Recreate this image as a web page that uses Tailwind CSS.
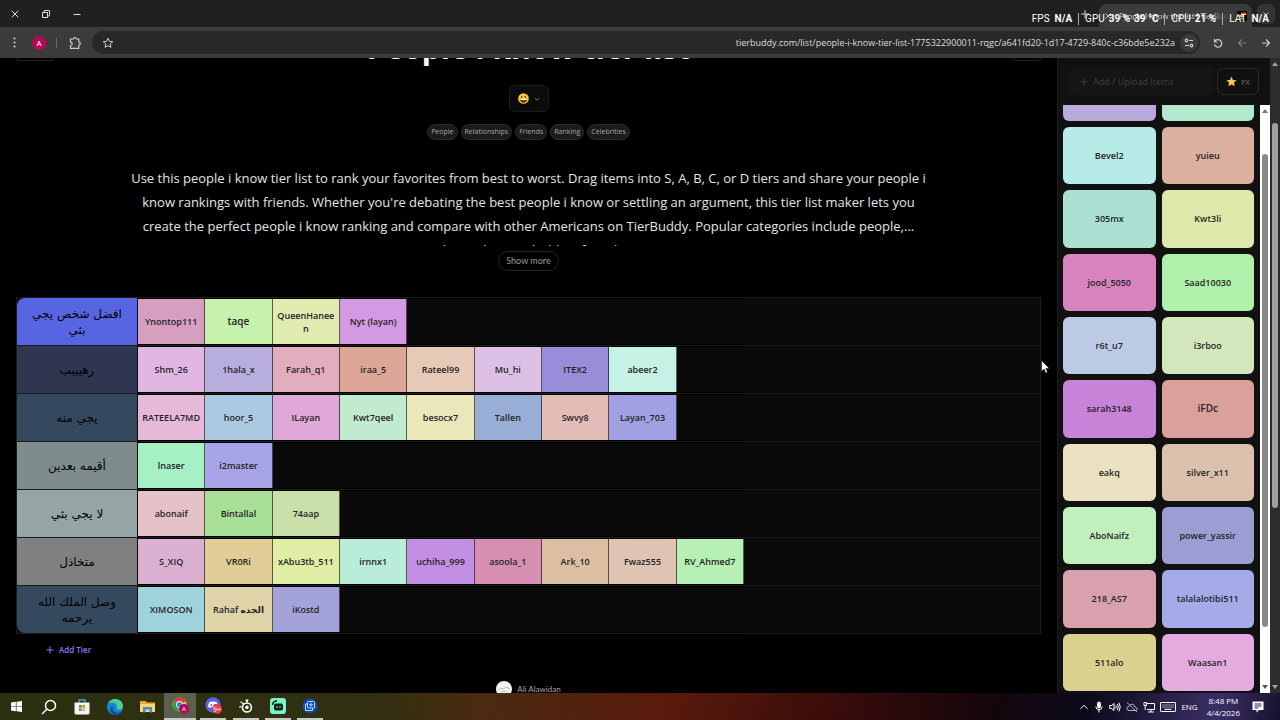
<!DOCTYPE html>
<html lang="en">
<head>
  <meta charset="UTF-8">
  <title>People I know tier list | TierBuddy</title>
  <script src="https://cdn.jsdelivr.net/npm/@tailwindcss/browser@4"></script>
</head>
<body class="relative flex h-screen flex-col overflow-hidden bg-black font-['Open_Sans','DejaVu_Sans',sans-serif] text-white">

  <!-- Window title bar -->
  <header class="flex h-[27px] shrink-0 items-center justify-between bg-[#1f2020] pl-2">
    <div class="flex items-center gap-[18px] text-[#dddddd]">
      <button aria-label="Close window" class="grid size-[13px] place-items-center">
        <svg class="size-2" viewBox="0 0 8 8" fill="none" stroke="currentColor"><path d="M.7.7l6.6 6.6M7.3.7L.7 7.3"/></svg>
      </button>
      <button aria-label="Restore window" class="grid size-[13px] place-items-center">
        <svg class="size-2" viewBox="0 0 8 8" fill="none" stroke="currentColor"><path d="M.5 2.5h5v5h-5zM2 2.2V.9Q2 .5 2.4.5H7q.5 0 .5.5v4.6q0 .4-.4.4H6"/></svg>
      </button>
      <button aria-label="Minimize window" class="grid size-[13px] place-items-center">
        <svg class="size-2" viewBox="0 0 8 8" stroke="currentColor"><path d="M.5 4.5h7"/></svg>
      </button>
    </div>
    <div class="flex h-full items-center text-[#cccccc]">
      <button aria-label="New tab" class="mr-[6px] grid size-4 place-items-center">
        <svg class="size-2" viewBox="0 0 8 8" stroke="currentColor"><path d="M4 0v8M0 4h8"/></svg>
      </button>
      <div class="mt-1 flex h-[23px] w-[153px] items-center gap-2 rounded-t-lg bg-[#3b3b3b] pr-[5px] pl-[6px]">
        <button aria-label="Close tab">
          <svg class="size-[6px]" viewBox="0 0 6 6" stroke="currentColor"><path d="M.5.5l5 5M5.5.5l-5 5"/></svg>
        </button>
        <span class="flex-1 overflow-hidden bg-linear-to-r from-[#dddddd] from-80% to-transparent bg-clip-text font-['Lato',sans-serif] text-[8px] whitespace-nowrap text-transparent">People I know tier list | TierBuddy</span>
        <svg class="size-[10px]" viewBox="0 0 10 10"><path fill="#000" d="M0 0h10v10H0z"/><path stroke="#37c25b" stroke-width="2" d="M3 7.5h3"/><path stroke="#f0b23c" stroke-width="2" d="M2 5h5"/><path stroke="#ef5350" stroke-width="2" d="M4 2.5h5"/></svg>
      </div>
      <button aria-label="Search tabs" class="mx-[5px] grid h-[20px] w-[18px] place-items-center rounded-md bg-[#343434]">
        <svg class="size-[6px]" viewBox="0 0 6 6" fill="none" stroke="currentColor"><path d="M.5 1.5L3 4l2.500-2.500"/></svg>
      </button>
    </div>
  </header>

  <!-- Browser toolbar -->
  <nav class="flex h-[31px] shrink-0 items-center bg-[#3b3b3b] pr-[9px] pl-2 text-[#cccccc]">
    <button aria-label="Menu" class="grid w-[13px] place-items-center">
      <svg class="h-[11px] w-[3px]" viewBox="0 0 3 11" fill="currentColor"><circle cx="1.500" cy="1.500" r="1.100"/><circle cx="1.500" cy="5.500" r="1.100"/><circle cx="1.500" cy="9.500" r="1.100"/></svg>
    </button>
    <button class="ml-[11px] size-[14px] rounded-full bg-[#b5085a] text-center text-[8px] leading-[14px] text-white">A</button>
    <span class="ml-[10px] h-[10px] w-px bg-[#666666]"></span>
    <button aria-label="Extensions" class="ml-3">
      <svg class="size-3" viewBox="0 0 12 12" fill="none" stroke="currentColor" stroke-width="1.200"><path d="M1.500 2h3q.2-1.300 1.500-1.300T7.500 2h2.300v3q1.500.1 1.500 1.500T9.800 8v3.300H1.500V8.500q1.700-.2 1.700-1.700T1.500 5.200z"/></svg>
    </button>
    <div class="ml-[11px] flex h-[23px] flex-1 items-center justify-between rounded-full bg-[#282828] pr-[2px] pl-[10px]">
      <button aria-label="Bookmark this page">
        <svg class="size-3" viewBox="0 0 12 12" fill="none" stroke="currentColor"><path d="M6 1.200l1.400 3.200 3.400.3-2.600 2.300.8 3.400L6 8.600l-3 1.800.8-3.400L1.200 4.700l3.400-.3z"/></svg>
      </button>
      <div class="flex items-center gap-[5px]">
        <input aria-label="Address" dir="ltr" class="w-[480px] bg-transparent text-right text-[9px] text-[#dedede] outline-none" value="tierbuddy.com/list/people-i-know-tier-list-1775322900011-rqgc/a641fd20-1d17-4729-840c-c36bde5e232a">
        <button aria-label="Site information" class="grid size-[18px] place-items-center rounded-full bg-[#3b3b3b]">
          <svg class="size-[10px]" viewBox="0 0 10 10" fill="none" stroke="currentColor" stroke-width="1.200"><path d="M5 2.500h4M1 7.500h4"/><circle cx="2.500" cy="2.500" r="1.300"/><circle cx="7.500" cy="7.500" r="1.300"/></svg>
        </button>
      </div>
    </div>
    <div class="ml-[13px] flex items-center gap-[14px]">
      <button aria-label="Reload"><svg class="size-[10px]" viewBox="0 0 10 10" fill="none" stroke="currentColor" stroke-width="1.200"><path d="M1.500 1v3h3M1.700 3.700A3.700 3.700 0 1 1 1.500 6.500"/></svg></button>
      <button aria-label="Forward" class="text-[#7a7a7a]"><svg class="size-[10px]" viewBox="0 0 10 10" fill="none" stroke="currentColor" stroke-width="1.200"><path d="M9 5H1.500M5 1.500L1.500 5 5 8.500"/></svg></button>
      <button aria-label="Back"><svg class="size-[10px]" viewBox="0 0 10 10" fill="none" stroke="currentColor" stroke-width="1.200"><path d="M1 5h7.500M5 1.500L8.500 5 5 8.500"/></svg></button>
    </div>
  </nav>

  <div class="flex min-h-0 flex-1">
    <!-- Tier list page -->
    <main class="flex min-w-0 flex-1 flex-col overflow-hidden px-4">
      <div class="grid h-[27px] shrink-0 grid-cols-[1fr_auto_1fr] items-start">
        <button aria-label="Back to lists" class="h-[3px] w-[38px] rounded-b-md border border-t-0 border-[#222222]"></button>
        <h1 class="-mt-[30px] text-[30px] leading-10 font-bold">People i know tier list</h1>
        <button aria-label="More" class="h-[3px] w-[28px] justify-self-end rounded-b-md border border-t-0 border-[#222222]"></button>
      </div>

      <button aria-label="Pick emoji" class="mx-auto flex h-[27px] w-10 shrink-0 items-center justify-center gap-[5px] rounded-md border border-[#1c1c1c] bg-[#0b0b0b]">
        <svg class="size-[11px]" viewBox="0 0 12 12"><circle cx="6" cy="6" r="5.800" fill="#fbc93a"/><ellipse cx="4" cy="4.300" rx=".8" ry="1.200" fill="#5b3a12"/><ellipse cx="8" cy="4.300" rx=".8" ry="1.200" fill="#5b3a12"/><path d="M2 6.500h8q-.3 4-4 4t-4-4z" fill="#5b3a12"/><path d="M2.600 6.500h6.800v1.200H2.600z" fill="#fff"/></svg>
        <svg class="size-[6px]" viewBox="0 0 6 6" fill="none" stroke="#777777"><path d="M.7 2L3 4.200 5.300 2"/></svg>
      </button>

      <div class="mt-3 flex shrink-0 justify-center gap-[3px] text-[7px] leading-[14px] text-[#a6a6a6]">
        <a href="#" class="rounded-full border border-[#2a2a2a] bg-[#1b1b1b] px-[3px]">People</a>
        <a href="#" class="rounded-full border border-[#2a2a2a] bg-[#1b1b1b] px-[3px]">Relationships</a>
        <a href="#" class="rounded-full border border-[#2a2a2a] bg-[#1b1b1b] px-[3px]">Friends</a>
        <a href="#" class="rounded-full border border-[#2a2a2a] bg-[#1b1b1b] px-[3px]">Ranking</a>
        <a href="#" class="rounded-full border border-[#2a2a2a] bg-[#1b1b1b] px-[3px]">Celebrities</a>
      </div>

      <div class="mt-[26px] h-[80px] shrink-0 overflow-hidden text-center text-[13px] leading-6 text-[#e4e4e4]">
        <p>Use this people i know tier list to rank your favorites from best to worst. Drag items into S, A, B, C, or D tiers and share your people i<br>know rankings with friends. Whether you're debating the best people i know or settling an argument, this tier list maker lets you<br>create the perfect people i know ranking and compare with other Americans on TierBuddy. Popular categories include people,...<br>relationships and sibling friends.</p>
      </div>

      <button class="mx-auto mt-[5px] h-5 shrink-0 rounded-full border border-[#242424] px-[7px] font-['Lato',sans-serif] text-[9px] text-[#9a9a9a]">Show more</button>

      <section id="board" class="mt-[26px] shrink-0 border border-[#1c1c1c] bg-[#0a0a0a]"></section>

      <button class="mt-[9px] ml-[30px] flex shrink-0 items-center gap-[5px] self-start text-[8px] leading-[14px] font-semibold text-[#8f7af0]">
        <svg class="size-2" viewBox="0 0 8 8" stroke="currentColor"><path d="M4 .5v7M.5 4h7"/></svg>
        Add Tier
      </button>

      <a href="#" class="mx-auto mt-6 flex shrink-0 items-center gap-[5px] font-['Lato',sans-serif] text-[8px] text-[#a3a3a3]">
        <svg class="size-4" viewBox="0 0 16 16"><circle cx="8" cy="8" r="8" fill="#f2f2f2"/><path d="M2 9l3-2 2 1 3-2 4 2M5 11l3-1 3 1" stroke="#bbbbbb" fill="none"/></svg>
        Ali Alawidan
      </a>
    </main>

    <!-- Item pool -->
    <aside class="flex w-[213px] shrink-0 flex-col border-l border-[#1d1d1d] bg-[#111111] pt-[10px]">
      <div class="flex gap-1 pr-[11px] pl-[10px]">
        <button class="flex h-[27px] flex-1 items-center gap-[5px] rounded-md bg-[#151515] pl-3 text-[9px] text-[#3f3f3f]">
          <svg class="size-2" viewBox="0 0 8 8" stroke="currentColor"><path d="M4 .5v7M.5 4h7"/></svg>
          Add / Upload Items
        </button>
        <button class="flex h-[27px] w-[42px] items-center justify-center gap-1 rounded-md border border-[#2a2a2a] text-[8px] text-[#707070]">
          <svg class="size-[11px]" viewBox="0 0 12 12" fill="#fbc93a"><path d="M6 .5l1.600 3.800 4 .3-3 2.700.9 4L6 9.200l-3.500 2.100.9-4-3-2.700 4-.3z"/></svg>
          FX
        </button>
      </div>
      <div class="mt-[10px] flex min-h-0 flex-1">
        <div id="pool" class="grid flex-1 grid-cols-2 grid-rows-[16px_repeat(9,minmax(0,1fr))] gap-[6px] pr-[6px] pb-[2px] pl-[5px] text-center text-[9px] font-semibold"></div>
        <div class="flex w-[10px] flex-col items-center justify-between bg-white py-1">
          <svg class="h-[4px] w-[6px]" viewBox="0 0 6 4"><path fill="#777777" d="M3 0l3 4H0z"/></svg>
          <span class="mt-[41px] mb-[58px] w-[6px] flex-1 rounded-full bg-[#888888]"></span>
          <svg class="h-[4px] w-[6px]" viewBox="0 0 6 4"><path fill="#555555" d="M0 0h6L3 4z"/></svg>
        </div>
      </div>
    </aside>

    <!-- Page scrollbar -->
    <div class="flex w-[10px] shrink-0 flex-col items-center bg-[#2c2c2c] py-1">
      <svg class="h-[4px] w-[6px]" viewBox="0 0 6 4"><path fill="#a0a0a0" d="M3 0l3 4H0z"/></svg>
      <span class="mt-[57px] mb-[177px] w-[6px] flex-1 rounded-full bg-[#9f9f9f]"></span>
      <svg class="h-[4px] w-[6px]" viewBox="0 0 6 4"><path fill="#a0a0a0" d="M0 0h6L3 4z"/></svg>
    </div>
  </div>

  <!-- Taskbar -->
  <footer class="flex h-[27px] shrink-0 items-stretch justify-between bg-[linear-gradient(100deg,#2b3010_0%,#2f3011_28%,#4a2a10_38%,#5a1a0c_52%,#3a0c0a_65%,#12060c_78%,#0d0a1c_85%,#3a2f66_95%,#17122e_100%)]">
    <div class="flex">
      <button aria-label="Start" class="grid w-8 place-items-center">
        <svg class="size-[11px]" viewBox="0 0 12 12" fill="#fff"><path d="M0 1.700l5.300-.8v4.800H0zM6 .8L12 0v5.700H6zM0 6.300h5.300v4.900L0 10.400zM6 6.300h6V12l-6-.8z"/></svg>
      </button>
      <button aria-label="Search" class="grid w-[33px] place-items-center">
        <svg class="size-4" viewBox="0 0 16 16" fill="none" stroke="#fff" stroke-width="1.500"><circle cx="9.500" cy="6.500" r="5"/><path d="M6 10l-5 5"/></svg>
      </button>
      <button aria-label="Microsoft Store" class="grid w-[33px] place-items-center">
        <svg class="size-4" viewBox="0 0 16 16"><path d="M5 4V1h6v3" fill="none" stroke="#42a5dd" stroke-width="1.300"/><path fill="#f3f3f3" d="M.5 3.500h15V14q0 1.500-1.500 1.500H2Q.5 15.500.5 14z"/><path fill="#e5532d" d="M5 6h2.700v2.700H5z"/><path fill="#7cb928" d="M8.300 6H11v2.700H8.300z"/><path fill="#21a1e8" d="M5 9.300h2.700V12H5z"/><path fill="#f9b917" d="M8.300 9.300H11V12H8.300z"/></svg>
      </button>
      <button aria-label="Edge" class="grid w-[33px] place-items-center">
        <svg class="size-4" viewBox="0 0 16 16"><circle cx="8" cy="8" r="8" fill="#1683d6"/><path fill="#4bd08b" d="M1 4.500Q4-.2 8.500 0 15.500.5 16 7q-.2 3.600-4 3.700-3-.1-2.400-2Q10.500 4 6 3.500 3 3.200 1 4.500z"/><path fill="#0d4f9e" d="M5.500 7q-.8 5.500 4 6.700 2.500.5 4.800-.9Q12 16 8 16 3 15 3.200 10.500 3.500 8 5.500 7z"/></svg>
      </button>
      <button aria-label="File Explorer" class="grid w-[33px] place-items-center">
        <svg class="size-[15px]" viewBox="0 0 15 15"><path fill="#e9a92e" d="M0 2h5.500L7 3.500h8V13H0z"/><path fill="#fcd768" d="M0 5h15v8H0z"/><path fill="#3e8fd5" d="M3 8h9v5.500H9.500v-3h-4v3H3z"/></svg>
      </button>
      <button aria-label="Chrome" class="grid w-8 place-items-center border-b-2 border-[#c9c9c4] bg-[#5c5f4c]">
        <svg class="size-[17px]" viewBox="0 0 17 17"><circle cx="7.500" cy="7.500" r="7" fill="#f7c52d"/><path fill="#df3b31" d="M7.500 7.500L1.300 4.200A7 7 0 0 1 13.800 4.500z"/><path fill="#2c9f4b" d="M7.500 7.500L1.300 4.200a7 7 0 0 0 5.200 10.200z"/><circle cx="7.500" cy="7.500" r="3.400" fill="#fff"/><circle cx="7.500" cy="7.500" r="2.600" fill="#3d7fe8"/><circle cx="12" cy="12" r="5" fill="#b5085a"/><text x="12" y="14" font-size="6" fill="#fff" text-anchor="middle">A</text></svg>
      </button>
      <button aria-label="Discord" class="mx-1 grid w-[26px] place-items-center border-b-2 border-[#c9c9c4]">
        <svg class="size-[17px]" viewBox="0 0 17 17"><circle cx="8" cy="8" r="7.700" fill="#5563e6"/><path fill="#fff" d="M4.500 5Q8 4 11.500 5q1.500 2.500 1.300 5l-2 1-.8-1H6l-.8 1-2-1Q3 7.500 4.500 5z"/><circle cx="6.300" cy="8" r="1" fill="#5563e6"/><circle cx="9.700" cy="8" r="1" fill="#5563e6"/><circle cx="12" cy="12" r="5" fill="#df3f4c"/><text x="12" y="14.500" font-size="7" fill="#fff" text-anchor="middle">9+</text></svg>
      </button>
      <button aria-label="SteelSeries" class="mx-[3px] grid w-[26px] place-items-center border-b-2 border-[#c9c9c4]">
        <svg class="size-[14px]" viewBox="0 0 15 15" fill="none" stroke="#fff" stroke-width="1.700"><circle cx="8.500" cy="9" r="4.800"/><circle cx="8.500" cy="9" r="1.100" fill="#fff"/><path d="M8.500 4V1.500M7 1.300h3M4.800 5.300L3.500 4"/><circle cx="1.500" cy="8.500" r=".3"/><circle cx="2.500" cy="3.500" r=".3"/></svg>
      </button>
      <button aria-label="Stream app" class="mx-[3px] grid w-[26px] place-items-center border-b-2 border-[#c9c9c4]">
        <svg class="size-4" viewBox="0 0 16 16"><rect width="16" height="16" rx="3" fill="#7df2c4"/><path d="M2.500 7Q3 3 7 3" fill="none" stroke="#0a2019" stroke-width="1.500"/><rect x="4" y="5.500" width="9" height="7" rx="2" fill="#0a2019"/><path d="M7 8v2M10 8v2" stroke="#7df2c4"/></svg>
      </button>
      <button aria-label="Capture tool" class="mx-[3px] grid w-[26px] place-items-center border-b-2 border-[#c9c9c4]">
        <svg class="size-4" viewBox="0 0 16 16" fill="none" stroke="#b9d7ff"><circle cx="8" cy="8" r="7.500" fill="#0d4cae" stroke="none"/><rect x="5.500" y="3.500" width="7" height="6.500" rx="1"/><path d="M5.500 6h-2v6.500h7V10"/><path d="M7 6.800h4M9 4.800v4"/></svg>
      </button>
    </div>
    <div class="flex items-center gap-[5px] pr-4 text-[8px]">
      <svg class="size-[10px]" viewBox="0 0 10 10" fill="none" stroke="#fff"><path d="M1.500 6.800L5 3.300l3.500 3.500"/></svg>
      <svg class="h-3 w-[10px]" viewBox="0 0 10 12" fill="none" stroke="#fff"><rect x="3.500" y="1" width="3" height="6" rx="1.500" fill="#fff"/><path d="M1.800 5.500Q2 8.800 5 8.800t3.200-3.300M5 9v2.500"/></svg>
      <svg class="size-3" viewBox="0 0 12 12" fill="none" stroke="#fff"><path d="M.7 4.500h2L5 2.500v7L2.700 7.500h-2zM6.700 4.500q1 1.500 0 3M8.300 3q2 3 0 6M10 1.700q2.500 4.300 0 8.600"/></svg>
      <svg class="size-3" viewBox="0 0 12 12" fill="none" stroke="#b8b8c4"><path d="M3 9.500Q.7 9.200.8 7.300 1.200 5.500 3 5.500 4 3 6.500 3.200 8.700 3.700 9 6q2 .3 2.200 1.800-.2 1.700-2 1.700zM1 1.500l10 9.500"/></svg>
      <svg class="size-3" viewBox="0 0 12 12" fill="none" stroke="#fff"><path d="M4 2.500h7.500v6H4M1 1.500h2.500v3H1zM2.200 4.500V9M5 11h6M8 8.500V11"/></svg>
      <svg class="h-[10px] w-4" viewBox="0 0 16 10" fill="none" stroke="#fff"><rect x=".5" y=".5" width="15" height="9" rx=".5"/><path d="M2.500 3h11M2.500 5h11" stroke-dasharray="1 1"/><path d="M4.500 7.300h7"/></svg>
      <span>ENG</span>
      <time class="ml-1 text-center leading-[12px]">8:48 PM<br>4/4/2026</time>
      <svg class="ml-[7px] size-3" viewBox="0 0 12 12"><path fill="#fff" d="M.5.500h11V9H7l-2.500 2.500V9h-4z"/><path d="M2.500 3h7M2.500 5h7M2.500 7h4" stroke="#2a2546"/></svg>
    </div>
  </footer>

  <!-- Performance overlay -->
  <div class="absolute top-[12px] right-[11px] flex items-center text-[10px] leading-[14px] font-['Roboto',sans-serif] whitespace-nowrap">
    <span>FPS</span><b class="ml-[5px]">N/A</b>
    <span class="mx-[6px] h-3 w-px bg-[#aaaaaa]"></span>
    <span>GPU</span><b class="ml-1">39 %</b><b class="ml-1">39 °C</b>
    <span class="mx-[6px] h-3 w-px bg-[#aaaaaa]"></span>
    <span>CPU</span><b class="ml-1">21 %</b>
    <span class="mx-[6px] h-3 w-px bg-[#aaaaaa]"></span>
    <span>LAT</span><b class="ml-[5px]">N/A</b>
  </div>

  <!-- Mouse pointer -->
  <svg class="absolute top-[360px] left-[1041px] h-[14px] w-[9px]" viewBox="0 0 9 14"><path fill="#fff" stroke="#000" stroke-width=".5" d="M.5.500v11l2.500-2.400 1.700 4 1.800-.8-1.700-3.900h3.500z"/></svg>

  <script>
  const tiers = [
    { label: "افضل شخص يجي بثي", color: "bg-[#5865e3]", items: [["Ynontop111", "bg-[#d69ebf]"], ["taqe", "bg-[#c6f2ad]"], ["QueenHaneen", "bg-[#e2ebb0]"], ["Nyt (layan)", "bg-[#d499e3]"]] },
    { label: "رهيييب", color: "bg-[#2f3650]", items: [["Shm_26", "bg-[#e0b7e3]"], ["1hala_x", "bg-[#b8aedd]"], ["Farah_q1", "bg-[#e2aebe]"], ["iraa_5", "bg-[#dda797]"], ["Rateel99", "bg-[#e6cab7]"], ["Mu_hi", "bg-[#dcc0e6]"], ["ITEX2", "bg-[#988dd8]"], ["abeer2", "bg-[#c5f2e5]"]] },
    { label: "يجي منه", color: "bg-[#34495e]", items: [["RATEELA7MD", "bg-[#e6b9d8]"], ["hoor_5", "bg-[#abcae2]"], ["ILayan", "bg-[#e0a7d9]"], ["Kwt7qeel", "bg-[#c1ebcf]"], ["besocx7", "bg-[#ebe7ba]"], ["Tallen", "bg-[#98aed6]"], ["Swvy8", "bg-[#e2bdb7]"], ["Layan_703", "bg-[#a1a0e3]"]] },
    { label: "أقيمه بعدين", color: "bg-[#7f8c8d]", items: [["lnaser", "bg-[#a5f0c4]"], ["i2master", "bg-[#a6a3e6]"]] },
    { label: "لا يجي بثي", color: "bg-[#95a5a6]", items: [["abonaif", "bg-[#e5c1c8]"], ["Bintallal", "bg-[#a8df96]"], ["74aap", "bg-[#c9e0aa]"]] },
    { label: "متخاذل", color: "bg-[#808080]", items: [["S_XIQ", "bg-[#dbb1d2]"], ["VR0Ri", "bg-[#e2cd98]"], ["xAbu3tb_511", "bg-[#e0eda4]"], ["irnnx1", "bg-[#b9edd9]"], ["uchiha_999", "bg-[#c28fe2]"], ["asoola_1", "bg-[#d68eb1]"], ["Ark_10", "bg-[#dcbea2]"], ["Fwaz555", "bg-[#dfc4b3]"], ["RV_Ahmed7", "bg-[#b7f0b4]"]] },
    { label: "وصل الملك الله يرحمه", color: "bg-[#34495e]", items: [["XIMOSON", "bg-[#9fd3dc]"], ["Rahaf الجده", "bg-[#dfd3a8]"], ["iKostd", "bg-[#a3a3da]"]] },
  ];

  const pool = [
    ["", "bg-[#b8aadd]"], ["", "bg-[#b3e8cd]"],
    ["Bevel2", "bg-[#b7ebe8]"], ["yuieu", "bg-[#dbb09f]"],
    ["305mx", "bg-[#abe1d2]"], ["Kwt3li", "bg-[#dde9aa]"],
    ["jood_5050", "bg-[#d783bd]"], ["Saad10030", "bg-[#aff0aa]"],
    ["r6t_u7", "bg-[#bccae4]"], ["i3rboo", "bg-[#d3e7bd]"],
    ["sarah3148", "bg-[#c783d7]"], ["iFDc", "bg-[#d9a199]"],
    ["eakq", "bg-[#e9e1c0]"], ["silver_x11", "bg-[#dbc0ae]"],
    ["AboNaifz", "bg-[#c1efbd]"], ["power_yassir", "bg-[#9b9dd3]"],
    ["218_AS7", "bg-[#d9a0ae]"], ["talalalotibi511", "bg-[#a5abe8]"],
    ["511alo", "bg-[#dad18f]"], ["Waasan1", "bg-[#e3abde]"],
  ];

  const board = document.getElementById("board");
  for (const tier of tiers) {
    const row = document.createElement("div");
    row.className = "flex min-h-12 border-b border-[#1c1c1c] last:min-h-[47px] last:border-b-0 group";

    const label = document.createElement("div");
    label.dir = "rtl";
    label.className = `flex w-[120px] shrink-0 items-center justify-center px-3 text-center font-['DejaVu_Sans',sans-serif] text-[12px] leading-4 text-black group-first:rounded-tl-lg group-last:rounded-bl-lg ${tier.color}`;
    label.textContent = tier.label;
    row.appendChild(label);

    const cells = document.createElement("div");
    cells.className = "ml-px grid w-[606px] grid-cols-9 border-y border-black text-center text-[9px] leading-[13px] font-semibold";
    for (const [name, color] of tier.items) {
      const cell = document.createElement("div");
      cell.className = `flex items-center justify-center border-r border-black/60 text-[#242424] ${color}`;
      if (name === "taqe") cell.classList.add("text-[10px]");
      const text = document.createElement("span");
      text.className = "max-w-[60px] break-words";
      text.textContent = name;
      cell.appendChild(text);
      cells.appendChild(cell);
    }
    row.appendChild(cells);
    board.appendChild(row);
  }

  const poolBox = document.getElementById("pool");
  pool.forEach(([name, color], i) => {
    const card = document.createElement("div");
    card.className = `flex items-center justify-center text-[#242424] ${i < 2 ? "rounded-b-md" : "rounded-md"} ${color}`;
    if (name === "iFDc") card.classList.add("text-[10px]");
    card.textContent = name;
    poolBox.appendChild(card);
  });
  </script>
</body>
</html>
